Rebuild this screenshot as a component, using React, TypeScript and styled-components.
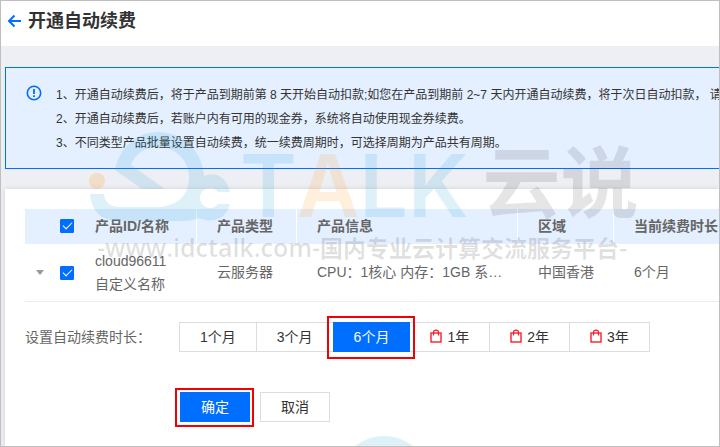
import React, { useState } from 'react';
import styled, { createGlobalStyle, css } from 'styled-components';

const GlobalStyle = createGlobalStyle`
  *, *::before, *::after { box-sizing: border-box; }
  body {
    margin: 0;
    font-family: "Liberation Sans", "Noto Sans CJK SC", sans-serif;
    font-size: 14px;
    color: #666;
  }
  button { font: inherit; cursor: pointer; }
`;

const Page = styled.div`
  position: relative;
  display: flex;
  flex-direction: column;
  min-height: 100vh;
  overflow: hidden;
  border: 1px solid #bfbfbf;
  background: #eeeff4;
`;

const Header = styled.header`
  display: flex;
  align-items: center;
  gap: 6px;
  height: 45px;
  padding: 0 6px 6px;
  background: #fff;
`;

const BackLink = styled.a`
  display: flex;
  color: #006eff;
`;

const Title = styled.h1`
  margin: 0;
  font-size: 18px;
  line-height: 24px;
  font-weight: 700;
  color: #333;
`;

const Notice = styled.section`
  display: flex;
  gap: 14px;
  margin: 21px 0 0 4px;
  padding: 15px 0 13px 20px;
  border: 1px solid #006eff;
  border-right: 0;
  background: #e4efff;
  overflow: hidden;
`;

const NoticeIcon = styled.svg`
  flex: none;
  margin-top: 2px;
`;

const NoticeList = styled.div`
  font-size: 12px;
  line-height: 24px;
  color: #333;
  white-space: nowrap;

  p { margin: 0; }
`;

const Panel = styled.main`
  flex: 1;
  margin: 20px 0 0 4px;
  padding: 20px 0 24px 20px;
  background: #fff;
  box-shadow: 0 0 5px rgba(0, 0, 0, 0.12);
`;

const Table = styled.table`
  width: 100%;
  table-layout: fixed;
  border-collapse: separate;
  border-spacing: 0;
  border-bottom: 1px solid #ebebf2;
`;

const cell = css`
  padding: 0 0 0 20px;
  text-align: left;
  white-space: nowrap;
`;

const HeadCell = styled.th<{ $divided?: boolean }>`
  ${cell}
  height: 35px;
  line-height: 16px;
  padding-bottom: 2px;
  background: #e4efff;
  border-right: ${(p) => (p.$divided ? '1px solid #fff' : '0')};
`;

const Cell = styled.td`
  ${cell}
  height: 57px;
  line-height: 23px;
`;

const Col = styled.col<{ $width?: number }>`
  width: ${(p) => (p.$width ? `${p.$width}px` : 'auto')};
`;

const Selector = styled.div`
  display: flex;
  align-items: center;
  justify-content: flex-end;
  gap: 16px;
  margin: 0 1px 0 -20px;
`;

const Expander = styled.button`
  display: flex;
  padding: 0;
  border: 0;
  background: none;
  color: #999;
`;

const CheckBox = styled.input`
  appearance: none;
  display: grid;
  place-items: center;
  width: 14px;
  height: 14px;
  margin: 0;
  border: 1px solid #bbb;
  border-radius: 1px;
  background: #fff;

  &:checked { background: #006eff; border-color: #006eff; }
  &:checked::after {
    content: '';
    width: 9px;
    height: 5px;
    margin-bottom: 3px;
    border: solid #fff;
    border-width: 0 0 1px 1px;
    transform: rotate(-45deg);
  }
`;

const FormRow = styled.div`
  display: flex;
  align-items: center;
  margin-top: 20px;
`;

const Label = styled.div`
  width: 154px;
  flex: none;
  padding-bottom: 2px;
`;

const Segments = styled.div`
  display: flex;
`;

const framed = css`
  &::after {
    content: '';
    position: absolute;
    border: 2px solid #f30006;
    pointer-events: none;
  }
`;

const Segment = styled.button<{ $active?: boolean; $framed?: boolean }>`
  position: relative;
  display: flex;
  align-items: center;
  justify-content: center;
  gap: 5px;
  height: 30px;
  padding: 0 20px 2px;
  white-space: nowrap;
  border: 1px solid ${(p) => (p.$active ? '#006eff' : '#ddd')};
  background: ${(p) => (p.$active ? '#006eff' : '#fff')};
  color: ${(p) => (p.$active ? '#fff' : '#333')};
  z-index: ${(p) => (p.$active ? 1 : 0)};

  & + & { margin-left: -1px; }

  ${(p) => p.$framed && framed}
  &::after { inset: -7px -6px -8px -7px; }
`;

const Actions = styled.div`
  display: flex;
  gap: 10px;
  margin: 40px 0 0 155px;
`;

const Action = styled.button<{ $primary?: boolean }>`
  position: relative;
  width: 70px;
  height: 30px;
  padding: 0 0 2px;
  border: 1px solid ${(p) => (p.$primary ? '#006eff' : '#ddd')};
  background: ${(p) => (p.$primary ? '#006eff' : '#fff')};
  color: ${(p) => (p.$primary ? '#fff' : '#333')};

  ${(p) => p.$primary && framed}
  &::after { inset: -5px -5px -6px -6px; }
`;

const Watermark = styled.div`
  position: absolute;
  inset: 0;
  overflow: hidden;
  pointer-events: none;
  z-index: 2;
`;

const Brand = styled.div`
  position: absolute;
  top: 130px;
  left: 87px;
  display: flex;
  align-items: flex-start;
`;

const BrandLetters = styled.div`
  display: flex;
  margin-left: 7px;
  padding-top: 13px;
  font: 600 86px/84px Inter, sans-serif;
  color: rgba(35, 162, 215, 0.15);
`;

const Accent = styled.span`
  color: rgba(250, 155, 25, 0.15);
`;

const BrandName = styled.div`
  margin-left: 14px;
  padding-top: 5px;
  font: 700 78px/84px "Noto Sans CJK SC", sans-serif;
  color: rgba(0, 0, 0, 0.1);
`;

const Slogan = styled.div`
  position: absolute;
  top: 231px;
  left: 96px;
  font: 700 23px/30px "Noto Sans CJK SC", sans-serif;
  color: rgba(0, 0, 0, 0.12);
  white-space: nowrap;
`;

const SiteName = styled.span`
  font-family: "Open Sans", sans-serif;
  font-weight: 600;
  font-size: 25px;
`;

const NextBrand = styled.div`
  position: absolute;
  top: 435px;
  left: 337px;
  width: 92px;
  height: 92px;
  border-radius: 50%;
  background: rgba(35, 162, 215, 0.15);
`;

const Bag = () => (
  <svg width="12" height="14" viewBox="0 0 12 14" fill="none" stroke="#f5222d" aria-hidden="true">
    <rect x="1" y="4" width="10" height="9" strokeWidth="1.4" />
    <path d="M3.5 6.5V3.5C3.5 .4 8.5 .4 8.5 3.5V6.5" strokeWidth="1.2" />
  </svg>
);

const columns = ['产品ID/名称', '产品类型', '产品信息', '区域', '当前续费时长'];

const periods = [
  { label: '1个月' },
  { label: '3个月' },
  { label: '6个月', framed: true },
  { label: '1年', sale: true },
  { label: '2年', sale: true },
  { label: '3年', sale: true },
];

export default function App() {
  const [checked, setChecked] = useState(true);
  const [period, setPeriod] = useState('6个月');
  const toggle = () => setChecked(!checked);

  return (
    <>
      <GlobalStyle />
      <Page>
        <Header>
          <BackLink href="#" aria-label="返回">
            <svg width="15" height="14" viewBox="0 0 15 14" fill="none" stroke="currentColor" strokeWidth="2">
              <path d="M14 7H2M7.5 1.5L2 7L7.5 12.5" />
            </svg>
          </BackLink>
          <Title>开通自动续费</Title>
        </Header>

        <Notice>
          <NoticeIcon width="16" height="16" viewBox="0 0 16 16" fill="none" stroke="#006eff" aria-hidden="true">
            <circle cx="8" cy="8" r="6.7" strokeWidth="1.6" />
            <path d="M8 4V9M8 10.3V12" strokeWidth="1.8" />
          </NoticeIcon>
          <NoticeList>
            <p>1、开通自动续费后，将于产品到期前第 8 天开始自动扣款;如您在产品到期前 2~7 天内开通自动续费，将于次日自动扣款， 请</p>
            <p>2、开通自动续费后，若账户内有可用的现金券，系统将自动使用现金券续费。</p>
            <p>3、不同类型产品批量设置自动续费，统一续费周期时，可选择周期为产品共有周期。</p>
          </NoticeList>
        </Notice>

        <Panel>
          <Table>
            <colgroup>
              <Col $width={50} />
              <Col $width={122} />
              <Col $width={100} />
              <Col $width={221} />
              <Col $width={96} />
              <Col />
            </colgroup>
            <thead>
              <tr>
                <HeadCell>
                  <Selector>
                    <CheckBox type="checkbox" aria-label="全选" checked={checked} onChange={toggle} />
                  </Selector>
                </HeadCell>
                {columns.map((name, i) => (
                  <HeadCell key={name} $divided={i < columns.length - 1}>{name}</HeadCell>
                ))}
              </tr>
            </thead>
            <tbody>
              <tr>
                <Cell>
                  <Selector>
                    <Expander aria-label="展开">
                      <svg width="8" height="5" viewBox="0 0 8 5" fill="currentColor"><path d="M0 0H8L4 5Z" /></svg>
                    </Expander>
                    <CheckBox type="checkbox" aria-label="cloud96611" checked={checked} onChange={toggle} />
                  </Selector>
                </Cell>
                <Cell>cloud96611<br />自定义名称</Cell>
                <Cell>云服务器</Cell>
                <Cell>CPU：1核心 内存：1GB 系…</Cell>
                <Cell>中国香港</Cell>
                <Cell>6个月</Cell>
              </tr>
            </tbody>
          </Table>

          <FormRow>
            <Label id="period-label">设置自动续费时长：</Label>
            <Segments role="group" aria-labelledby="period-label">
              {periods.map((p) => (
                <Segment
                  key={p.label}
                  $active={period === p.label}
                  $framed={p.framed}
                  aria-pressed={period === p.label}
                  onClick={() => setPeriod(p.label)}
                >
                  {p.sale && <Bag />}
                  {p.label}
                </Segment>
              ))}
            </Segments>
          </FormRow>

          <Actions>
            <Action $primary>确定</Action>
            <Action>取消</Action>
          </Actions>
        </Panel>

        <Watermark>
          <Brand>
            <svg width="145" height="92" viewBox="88 131 145 92" aria-hidden="true">
              <path
                fill="#23a2d7"
                fillOpacity="0.15"
                d="M115 170C120 146 138 132 158 132C183 132 203 152 204 176C214 171 227 176 230 192H218A10 10 0 1 0 218 204H230C226 221 209 223 199 218C190 222 180 221 165 221H118Q92 220 90 194H104Q105 207 120 207H160C180 205 189 193 189 177C189 160 175 147 158 147C144 147 134 155 131 165L165 189H142Z"
              />
              <circle cx="97" cy="181" r="8" fill="#fa9b19" fillOpacity="0.2" />
            </svg>
            <BrandLetters>
              <span>T</span>
              <Accent>A</Accent>
              <span>L</span>
              <span>K</span>
            </BrandLetters>
            <BrandName>云说</BrandName>
          </Brand>
          <Slogan><SiteName>-www.idctalk.com-</SiteName>国内专业云计算交流服务平台-</Slogan>
          <NextBrand />
        </Watermark>
      </Page>
    </>
  );
}
